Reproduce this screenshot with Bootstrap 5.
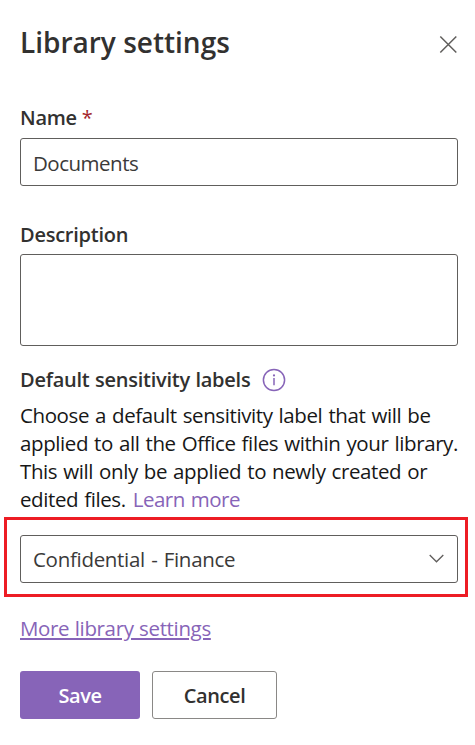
<!DOCTYPE html>
<html lang="en">
<head>
<meta charset="utf-8">
<meta name="viewport" content="width=device-width, initial-scale=1">
<title>Library settings</title>
<link href="https://cdn.jsdelivr.net/npm/bootstrap@5.3.0/dist/css/bootstrap.min.css" rel="stylesheet">
<style>
body{font-family:"Open Sans","Noto Sans",sans-serif;font-size:20.5px;line-height:28px;color:#323130;background:#fff}
.panel{width:475px;height:745px;padding:24px 17px 0 20px}
.panel-title{font-size:28px;line-height:36px;font-weight:600;letter-spacing:0}
.field-label{font-weight:600;font-size:20px;line-height:28px;margin:0;letter-spacing:-.25px;white-space:nowrap}
.field-name{margin-top:44px}
.field-desc{margin-top:35px}
.field-sens{margin-top:20px;letter-spacing:-.25px;word-spacing:.6px}
.required{color:#a4262c;font-weight:400}
.panel .field-box{height:48px;margin-top:6px;padding:1px 12px 0;border:1px solid #605e5c;border-radius:3px;font-size:inherit;line-height:28px;color:#3b3a39;letter-spacing:-.5px;background:#fff}
.panel .field-area{height:92px;margin-top:5px;resize:none;display:block}
.help-text{color:#171717;margin-top:7px;white-space:nowrap;letter-spacing:-.4px;word-spacing:1.1px}
.help-text>span{display:block}
.help-text a{margin-left:1px;letter-spacing:-.5px}
.accent,.accent:hover{color:#8764b8}
.highlight{border:3px solid #ed1c24;margin:4px -10px 0 -16px;padding:15px 7px 11px 13px;height:80px}
.panel .highlight .field-box{margin:0;padding:0 13px 1px 12px;letter-spacing:-.3px;word-spacing:1.2px}
.more-link{margin-top:17px;letter-spacing:-.35px;word-spacing:.5px}
.more-link a{text-decoration-thickness:2px;text-underline-offset:2px}
.actions{gap:12px;margin-top:29px}
.actions .btn{height:48px;border-radius:3px;font-size:20px;line-height:28px;font-weight:600;padding:2px 0 0;letter-spacing:-.4px}
.btn-save,.btn-save:hover{width:120px;background:#8764b8;color:#fff;border:0}
.btn-cancel{width:125px;border:1px solid #8a8886;color:#323130;background:#fff}
.close-x{margin-top:4px}
</style>
</head>
<body>
<main class="panel">
  <header class="d-flex justify-content-between align-items-center">
    <h1 class="panel-title m-0">Library settings</h1>
    <button class="btn p-0 border-0 close-x d-flex" aria-label="Close"><svg width="19" height="19" viewBox="0 0 19 19" fill="none" stroke="#605e5c" stroke-width="1.5"><path d="M1.3 1.5 17.3 17.5M17.3 1.5 1.3 17.5"/></svg></button>
  </header>
  <label class="field-label field-name d-block" for="name">Name <span class="required">*</span></label>
  <input class="form-control field-box" id="name" value="Documents">
  <label class="field-label field-desc d-block" for="desc">Description</label>
  <textarea class="form-control field-box field-area" id="desc"></textarea>
  <div class="field-label field-sens d-flex align-items-center">
    <span>Default sensitivity labels</span>
    <svg class="ms-2" width="30" height="24" viewBox="-4 0 30 24" fill="none" stroke="#8764b8" stroke-width="1.5"><circle cx="12" cy="12" r="10.6"/><path d="M12 10v7.2"/><circle cx="12" cy="7.4" r="1.1" fill="#8764b8" stroke="none"/></svg>
  </div>
  <div class="help-text">
    <span>Choose a default sensitivity label that will be</span>
    <span>applied to all the Office files within your library.</span>
    <span>This will only be applied to newly created or</span>
    <span>edited files. <a class="accent text-decoration-none" href="#">Learn more</a></span>
  </div>
  <div class="highlight">
    <div class="field-box d-flex align-items-center justify-content-between" role="combobox" aria-label="Default sensitivity label">
      <span>Confidential - Finance</span>
      <svg width="15" height="10" viewBox="0 0 15 10" fill="none" stroke="#605e5c" stroke-width="1.3"><path d="M.7 1 7.5 7.8 14.3 1"/></svg>
    </div>
  </div>
  <div class="more-link"><a class="accent" href="#">More library settings</a></div>
  <div class="actions d-flex">
    <button class="btn btn-save">Save</button>
    <button class="btn btn-cancel">Cancel</button>
  </div>
</main>
<script src="https://cdn.jsdelivr.net/npm/bootstrap@5.3.0/dist/js/bootstrap.bundle.min.js"></script>
</body>
</html>
